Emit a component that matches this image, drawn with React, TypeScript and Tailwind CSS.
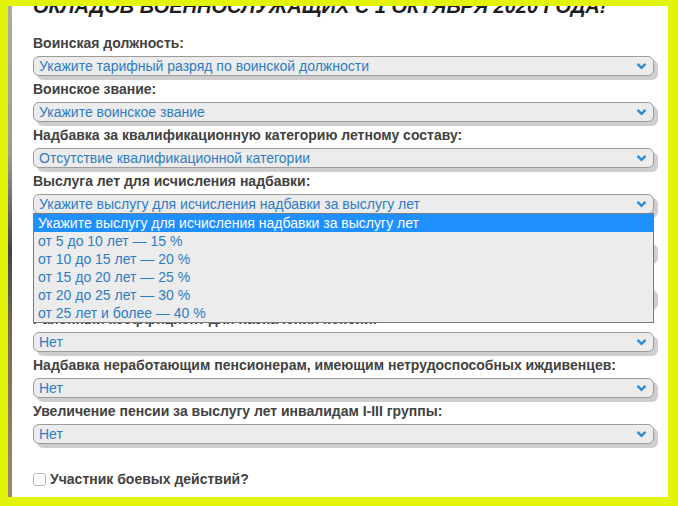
import React from 'react';

interface Field {
    label: string;
    value: string;
}

const fields: Field[] = [
    { label: 'Воинская должность:', value: 'Укажите тарифный разряд по воинской должности' },
    { label: 'Воинское звание:', value: 'Укажите воинское звание' },
    { label: 'Надбавка за квалификационную категорию летному составу:', value: 'Отсутствие квалификационной категории' },
    { label: 'Выслуга лет для исчисления надбавки:', value: 'Укажите выслугу для исчисления надбавки за выслугу лет' },
    { label: 'Надбавка за особые условия службы:', value: 'Нет' },
    { label: 'Надбавка за работу со сведениями, составляющими гостайну:', value: 'Нет' },
    { label: 'Районный коэффициент для назначения пенсии:', value: 'Нет' },
    { label: 'Надбавка неработающим пенсионерам, имеющим нетрудоспособных иждивенцев:', value: 'Нет' },
    { label: 'Увеличение пенсии за выслугу лет инвалидам I-III группы:', value: 'Нет' },
];

const serviceOptions = [
    'Укажите выслугу для исчисления надбавки за выслугу лет',
    'от 5 до 10 лет — 15 %',
    'от 10 до 15 лет — 20 %',
    'от 15 до 20 лет — 25 %',
    'от 20 до 25 лет — 30 %',
    'от 25 лет и более — 40 %',
];

function Chevron() {
    return (
        <svg width="11" height="8" viewBox="0 0 11 8" className="shrink-0">
            <path d="M1.5 1.8 L5.5 5.8 L9.5 1.8" fill="none" stroke="#2a8ad6" strokeWidth="2.4" />
        </svg>
    );
}

function SelectBox({ value, open }: { value: string; open?: boolean }) {
    return (
        <div className="relative mt-[3px] mb-[3px]">
            <div className="h-[20px] rounded-[6px] border border-[#9c9c9c] bg-[#ececec] shadow-[4px_4px_0_#cecece] flex items-center justify-between pl-[5px] pr-[6px] text-[14px] leading-[18px] text-[#2d7cc4]">
                <span className="truncate">{value}</span>
                <Chevron />
            </div>
            {open && (
                <div className="absolute left-0 right-0 top-[19px] z-10 border border-[#7a7a7a] bg-[#ececec] text-[14px] leading-[18px]">
                    {serviceOptions.map((o, i) => (
                        <div
                            key={o}
                            className={`h-[18px] pl-[4px] ${i === 0 ? 'bg-[#1e90ff] text-white' : 'text-[#2d7cc4]'}`}
                        >
                            {o}
                        </div>
                    ))}
                </div>
            )}
        </div>
    );
}

export default function App() {
    return (
        <div className="h-[506px] w-[678px] bg-[#e1f40a] pt-[6px] pl-[8px] pr-[10px] pb-[9px] font-['Liberation_Sans',Arial,sans-serif]">
            <div className="flex h-full">
                {/* thin photo strip on the left edge */}
                <div className="w-[4px] bg-[linear-gradient(to_bottom,#abada0_0%,#999c93_30%,#3b4549_50%,#736956_65%,#a08a66_100%)]" />
                <div className="flex-1 bg-white overflow-hidden pl-[21px] pr-[14px]">
                    <h2 className="-mt-[13px] h-[26px] text-[20px] leading-[26px] font-bold italic uppercase text-[#1e1e1e] whitespace-nowrap">
                        Окладов военнослужащих с 1 октября 2020 года!
                    </h2>
                    <div className="mt-[14px] flex flex-col">
                        {fields.map((f, i) => (
                            <div key={f.label}>
                                <div className="h-[20px] text-[14px] leading-[20px] font-bold text-[#424242] whitespace-nowrap">{f.label}</div>
                                <SelectBox value={f.value} open={i === 3} />
                            </div>
                        ))}
                    </div>
                    <label className="mt-[22px] flex items-center gap-[4px] h-[20px] text-[14px] font-bold text-[#424242]">
                        <span className="w-[13px] h-[13px] rounded-[3px] border border-[#b8b8b8] bg-white" />
                        Участник боевых действий?
                    </label>
                </div>
            </div>
        </div>
    );
}
